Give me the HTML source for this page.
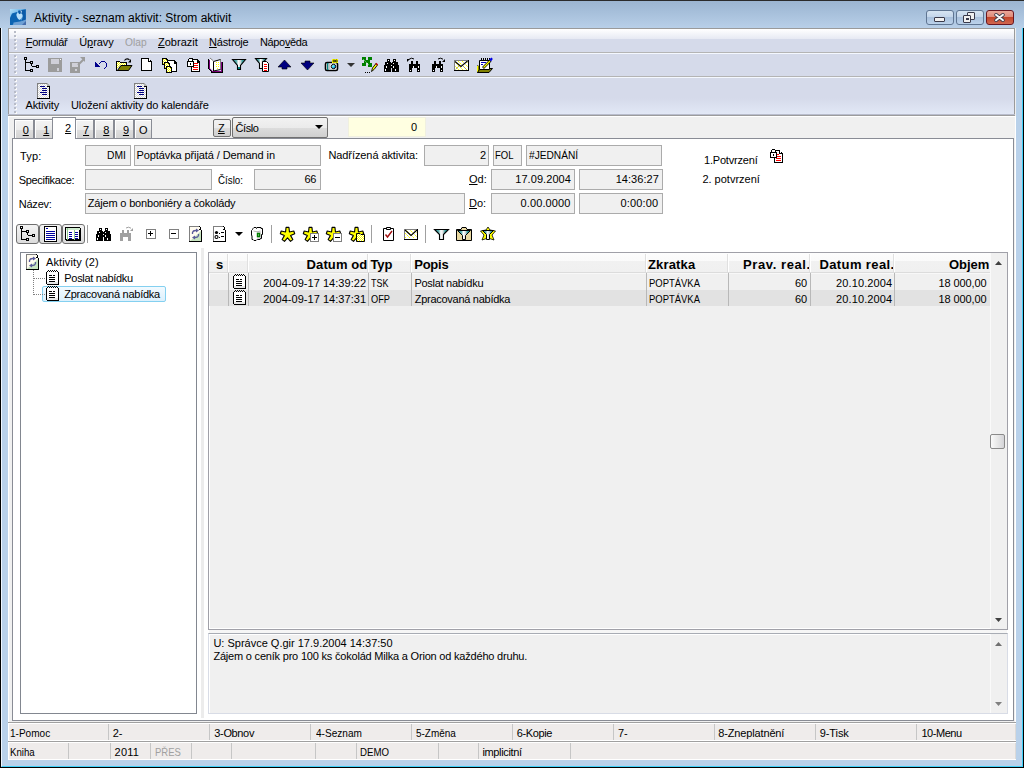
<!DOCTYPE html>
<html><head><meta charset="utf-8">
<style>
*{margin:0;padding:0;box-sizing:border-box}
html,body{width:1024px;height:768px;overflow:hidden;background:#b9d1ea}
body{position:relative;font-family:"Liberation Sans",sans-serif;font-size:11px;color:#000}
.a{position:absolute}
.t{position:absolute;white-space:nowrap;font-size:11px;line-height:13px}
.u{text-decoration:underline}
svg{position:absolute;overflow:visible}
.fld{position:absolute;background:#f0f0f0;border:1px solid #ababab}
.tab{position:absolute;top:119px;height:20px;border:1px solid #898c95;border-bottom:none;background:linear-gradient(#f4f4f4,#ececec 50%,#dedede 51%,#d2d2d2);box-shadow:inset 1px 1px 0 #fff}
.sep{position:absolute;width:1px;background:#c6c6c6}
</style></head><body>
<!-- outer frame -->
<div class="a" style="left:0;top:0;width:1024px;height:1px;background:#2b2b2b"></div>
<div class="a" style="left:0;top:1px;width:1024px;height:27px;background:linear-gradient(#9cb5d1,#a6bfda 40%,#b8cfe8)"></div>
<div class="a" style="left:0;top:28px;width:1px;height:740px;background:#000"></div><div class="a" style="left:1px;top:28px;width:1px;height:738px;background:#eef6ff"></div>
<div class="a" style="left:1022px;top:28px;width:1px;height:739px;background:#3fd0f8"></div>
<div class="a" style="left:1023px;top:28px;width:1px;height:740px;background:#000"></div>
<div class="a" style="left:2px;top:766px;width:1021px;height:1px;background:#3fd0f8"></div>
<div class="a" style="left:0;top:767px;width:1024px;height:1px;background:#000"></div>

<!-- title -->

<div class="t" style="left:34px;top:11px;font-size:12px;line-height:14px">Aktivity - seznam aktivit: Strom aktivit</div>

<!-- title buttons -->
<div class="a" style="left:926px;top:10px;width:28px;height:15px;border:1px solid #5f7592;border-radius:3px;background:linear-gradient(#d6e4f2,#c4d6ea 45%,#a9c1dd 50%,#bcd2ea)"></div>
<div class="a" style="left:934px;top:17px;width:11px;height:5px;border:1px solid #3a3a4a;background:#f0f0f0;border-radius:1px"></div>
<div class="a" style="left:956px;top:10px;width:28px;height:15px;border:1px solid #5f7592;border-radius:3px;background:linear-gradient(#d6e4f2,#c4d6ea 45%,#a9c1dd 50%,#bcd2ea)"></div>
<div class="a" style="left:967px;top:12px;width:8px;height:8px;border:1.5px solid #3a3a4a;background:#f0f0f0;border-radius:1px"></div>
<div class="a" style="left:963px;top:15px;width:8px;height:8px;border:1.5px solid #3a3a4a;background:#f0f0f0;border-radius:1px"></div><div class="a" style="left:966px;top:18px;width:3px;height:2px;background:#3a3a4a"></div>
<div class="a" style="left:986px;top:10px;width:28px;height:15px;border:1px solid #6a1620;border-radius:3px;background:linear-gradient(#eaa89a,#e08a78 45%,#c4452a 50%,#d06850)"></div>
<svg style="left:994px;top:13px" width="11" height="9" viewBox="0 0 11 9"><path d="M2 1.8L9 7.2M9 1.8L2 7.2" stroke="#3a3a48" stroke-width="3.6" stroke-linecap="round"/><path d="M2 1.8L9 7.2M9 1.8L2 7.2" stroke="#f6f6f6" stroke-width="2" stroke-linecap="round"/></svg>

<!-- client -->
<div class="a" style="left:8px;top:28px;width:1008px;height:732px;background:#f0f0f0"></div>
<div class="a" style="left:8px;top:116px;width:1px;height:644px;background:#fff"></div><div class="a" style="left:1015px;top:116px;width:1px;height:644px;background:#fff"></div><div class="a" style="left:8px;top:759px;width:1008px;height:1px;background:#fff"></div>
<!-- menu band -->
<div class="a" style="left:8px;top:28px;width:1007px;height:88px;border:1px solid #9a9a9a;border-bottom:none;background:#d5daea"></div>
<div class="a" style="left:9px;top:29px;width:1005px;height:10px;background:linear-gradient(#ffffff,#e6e9f3)"></div>
<div class="a" style="left:9px;top:52px;width:1005px;height:1px;background:#b4b4b4"></div>
<div class="a" style="left:9px;top:53px;width:1005px;height:1px;background:#f4f8ff"></div>
<div class="a" style="left:9px;top:76px;width:1005px;height:1px;background:#b4b4b4"></div>
<div class="a" style="left:9px;top:77px;width:1005px;height:1px;background:#f4f8ff"></div>
<div class="a" style="left:8px;top:114px;width:1007px;height:1px;background:#b8bccc"></div><div class="a" style="left:8px;top:116px;width:1007px;height:1px;background:#ffffff"></div>
<div class="a" style="left:9px;top:98px;width:1005px;height:16px;background:linear-gradient(#d5daea,#e2e8f6)"></div><div class="a" style="left:8px;top:115px;width:1007px;height:1px;background:#9c9c9c"></div>

<div class="t" style="left:25.8px;top:36px;letter-spacing:-0.31px"><u>F</u>ormulář</div>
<div class="t" style="left:79.2px;top:36px;letter-spacing:-0.06px">Ú<u>p</u>ravy</div>
<div class="t" style="left:124.5px;top:36px;color:#a0a0a0;transform:scaleX(0.930);transform-origin:0 0">Olap</div>
<div class="t" style="left:158.0px;top:36px"><u>Z</u>obrazit</div>
<div class="t" style="left:209.0px;top:36px;letter-spacing:-0.18px"><u>N</u>ástroje</div>
<div class="t" style="left:259.9px;top:36px;letter-spacing:-0.33px">Nápo<u>v</u>ěda</div>

<div class="t" style="left:25.6px;top:99px;letter-spacing:-0.17px">Aktivity</div>
<div class="t" style="left:71.0px;top:99px;letter-spacing:-0.10px">Uložení aktivity do kalendáře</div>


<!-- toolbar area background (client bg below toolbars) -->
<!-- tabs -->
<div class="tab" style="left:14px;width:20px"><span class="t u" style="left:7.7px;top:4px">0</span></div>
<div class="tab" style="left:34px;width:19px"><span class="t u" style="left:8.2px;top:4px">1</span></div>
<div class="tab" style="left:75px;width:19px"><span class="t u" style="left:7px;top:4px">7</span></div>
<div class="tab" style="left:94px;width:20px"><span class="t u" style="left:8.2px;top:4px">8</span></div>
<div class="tab" style="left:114px;width:20px"><span class="t u" style="left:7.9px;top:4px">9</span></div>
<div class="tab" style="left:134px;width:18px"><span class="t" style="left:4px;top:4px">O</span></div>
<!-- page -->
<div class="a" style="left:12px;top:138px;width:1002px;height:583px;background:#fff;border:1px solid #898c95"></div>
<div class="a" style="left:52px;top:117px;width:24px;height:22px;background:#fff;border:1px solid #898c95;border-bottom:none"></div>
<span class="t u" style="left:65px;top:122px">2</span>

<!-- Z button + combo + yellow -->
<div class="a" style="left:213px;top:119px;width:18px;height:18px;border:1px solid #707070;border-radius:2px;background:linear-gradient(#f2f2f2,#ebebeb 50%,#dddddd 51%,#cfcfcf)"></div>
<span class="t u" style="left:218px;top:122px">Z</span>
<div class="a" style="left:232px;top:117px;width:96px;height:21px;border:1px solid #707070;border-radius:2px;background:linear-gradient(#f2f2f2,#ebebeb 50%,#dddddd 51%,#cfcfcf)"></div>
<span class="t" style="left:235.5px;top:122px;letter-spacing:-0.4px">Číslo</span>
<svg style="left:315px;top:125px" width="9" height="5"><path d="M0 0H8L4 4Z" fill="#000"/></svg>
<div class="a" style="left:348px;top:117px;width:78px;height:20px;background:#ffffe1;border:1px solid #f0f0e0"></div>
<span class="t" style="left:411px;top:121px">0</span>

<!-- form labels -->
<span class="t" style="left:20.1px;top:150px;letter-spacing:0.12px">Typ:</span>
<span class="t" style="left:18.7px;top:174px;letter-spacing:-0.31px">Specifikace:</span>
<span class="t" style="left:18.7px;top:198px;letter-spacing:-0.20px">Název:</span>
<span class="t" style="left:217.5px;top:174px;transform:scaleX(0.887);transform-origin:0 0">Číslo:</span>
<span class="t" style="left:328.4px;top:149px;letter-spacing:-0.08px">Nadřízená aktivita:</span>
<span class="t" style="left:469px;top:173px"><u>O</u>d:</span>
<span class="t" style="left:469px;top:197px"><u>D</u>o:</span>
<span class="t" style="left:704.0px;top:154px;letter-spacing:-0.19px">1.Potvrzení</span>
<span class="t" style="left:702.4px;top:173px">2. potvrzení</span>

<div class="fld" style="left:85px;top:145px;width:46px;height:21px"></div><span class="t" style="left:107.4px;top:149px;transform:scaleX(0.935);transform-origin:0 0">DMI</span>
<div class="fld" style="left:134px;top:145px;width:187px;height:21px"></div><span class="t" style="left:136.5px;top:149px;letter-spacing:-0.10px">Poptávka přijatá / Demand in</span>
<div class="fld" style="left:424px;top:145px;width:65px;height:21px"></div><span class="t" style="left:479.9px;top:149px">2</span>
<div class="fld" style="left:493px;top:145px;width:29px;height:21px"></div><span class="t" style="left:495.2px;top:149px;transform:scaleX(0.865);transform-origin:0 0">FOL</span>
<div class="fld" style="left:526px;top:145px;width:136px;height:21px"></div><span class="t" style="left:529.2px;top:149px;transform:scaleX(0.924);transform-origin:0 0">#JEDNÁNÍ</span>
<div class="fld" style="left:85px;top:169px;width:127px;height:21px"></div>
<div class="fld" style="left:254px;top:169px;width:67px;height:21px"></div><span class="t" style="left:304.6px;top:173px;letter-spacing:-0.42px">66</span>
<div class="fld" style="left:491px;top:169px;width:84px;height:21px"></div><span class="t" style="left:515.2px;top:173px;letter-spacing:0.07px">17.09.2004</span>
<div class="fld" style="left:579px;top:169px;width:84px;height:21px"></div><span class="t" style="left:615.7px;top:173px;letter-spacing:0.04px">14:36:27</span>
<div class="fld" style="left:85px;top:193px;width:380px;height:21px"></div><span class="t" style="left:87.8px;top:197px;letter-spacing:-0.18px">Zájem o bonboniéry a čokolády</span>
<div class="fld" style="left:491px;top:193px;width:84px;height:21px"></div><span class="t" style="left:520.6px;top:197px;letter-spacing:0.10px">0.00.0000</span>
<div class="fld" style="left:579px;top:193px;width:84px;height:21px"></div><span class="t" style="left:620.6px;top:197px;letter-spacing:0.15px">0:00:00</span>

<!-- inner toolbar buttons -->
<div class="a" style="left:16px;top:224px;width:23px;height:20px;border:1px solid #6e6e6e;border-radius:3px;background:linear-gradient(#f4f4f4,#dcdcdc)"></div>
<div class="a" style="left:39px;top:224px;width:23px;height:20px;border:1px solid #6e6e6e;border-radius:3px;background:linear-gradient(#f4f4f4,#dcdcdc)"></div>
<div class="a" style="left:62px;top:224px;width:23px;height:20px;border:1px solid #6e6e6e;border-radius:3px;background:linear-gradient(#f4f4f4,#dcdcdc)"></div>
<div class="sep" style="left:87px;top:225px;height:18px;background:#a0a0a0"></div>
<div class="sep" style="left:271px;top:225px;height:18px;background:#a0a0a0"></div>
<div class="sep" style="left:371px;top:225px;height:18px;background:#a0a0a0"></div>
<div class="sep" style="left:425px;top:225px;height:18px;background:#a0a0a0"></div>

<!-- tree panel -->
<div class="a" style="left:20px;top:252px;width:177px;height:462px;border:1px solid #828790;background:#fff"></div>
<div class="a" style="left:201px;top:248px;width:3px;height:470px;background:#ececec"></div>
<span class="t" style="left:46.0px;top:256px;letter-spacing:0.12px">Aktivity (2)</span>
<span class="t" style="left:64.3px;top:272px;letter-spacing:-0.30px">Poslat nabídku</span>
<div class="a" style="left:42px;top:286px;width:124px;height:16px;border:1px solid #84d0f0;border-radius:2px;background:linear-gradient(#f2faff,#dcf0fc)"></div>
<span class="t" style="left:64.3px;top:288px;letter-spacing:-0.26px">Zpracovaná nabídka</span>
<div class="a" style="left:33px;top:270px;width:1px;height:25px;border-left:1px dotted #808080"></div>
<div class="a" style="left:34px;top:278px;width:11px;height:1px;border-top:1px dotted #808080"></div>
<div class="a" style="left:34px;top:294px;width:11px;height:1px;border-top:1px dotted #808080"></div>

<!-- grid -->
<div class="a" style="left:208px;top:252px;width:800px;height:378px;border:1px solid #a0a0a8;background:#f0f0f0;box-shadow:inset 1px -1px 0 #fff"></div>
<div class="a" style="left:209px;top:253px;width:781px;height:20px;background:linear-gradient(#fdfdfd,#fafafa 40%,#f1f1f1 41%,#f0f0f0)"></div>
<div class="a" style="left:209px;top:272px;width:781px;height:1px;background:#dcdcdc"></div><div class="a" style="left:209px;top:273px;width:781px;height:1px;background:#f8f8f8"></div>
<div class="a" style="left:209px;top:290px;width:781px;height:16px;background:#e2e2e2"></div>
<div class="a" style="left:990px;top:253px;width:17px;height:376px;background:#f0f0f0;border-left:1px solid #fafafa"></div>
<div class="a" style="left:990px;top:434px;width:15px;height:15px;border:1px solid #8a8a8a;border-radius:2px;background:linear-gradient(90deg,#fafafa,#e8e8e8 50%,#d4d4d8)"></div>


<!-- grid header text -->
<span class="t" style="left:216px;top:257px;font-size:13px;line-height:15px;font-weight:bold">s</span>
<span class="t" style="left:306.6px;top:257px;font-size:13px;line-height:15px;font-weight:bold;letter-spacing:0.11px">Datum od</span>
<span class="t" style="left:370.4px;top:257px;font-size:13px;line-height:15px;font-weight:bold;letter-spacing:-0.10px">Typ</span>
<span class="t" style="left:414.3px;top:257px;font-size:13px;line-height:15px;font-weight:bold;letter-spacing:-0.27px">Popis</span>
<span class="t" style="left:648.0px;top:257px;font-size:13px;line-height:15px;font-weight:bold;letter-spacing:0.16px">Zkratka</span>
<span class="t" style="left:743.0px;top:257px;font-size:13px;line-height:15px;font-weight:bold;letter-spacing:0.60px">Prav. real.</span>
<span class="t" style="left:819.4px;top:257px;font-size:13px;line-height:15px;font-weight:bold;letter-spacing:0.40px">Datum real.</span>
<span class="t" style="left:949.0px;top:257px;font-size:13px;line-height:15px;font-weight:bold;letter-spacing:-0.05px">Objem</span>
<!-- rows -->
<span class="t" style="left:263.2px;top:277px;letter-spacing:0.04px">2004-09-17 14:39:22</span>
<span class="t" style="left:371.0px;top:277px;transform:scaleX(0.812);transform-origin:0 0">TSK</span>
<span class="t" style="left:414.4px;top:277px;letter-spacing:-0.28px">Poslat nabídku</span>
<span class="t" style="left:648.5px;top:277px;transform:scaleX(0.859);transform-origin:0 0">POPTÁVKA</span>
<span class="t" style="left:794.9px;top:277px">60</span>
<span class="t" style="left:836.0px;top:277px;letter-spacing:0.12px">20.10.2004</span>
<span class="t" style="left:938.5px;top:277px;letter-spacing:-0.09px">18 000,00</span>
<span class="t" style="left:263.2px;top:293px;letter-spacing:0.04px">2004-09-17 14:37:31</span>
<span class="t" style="left:371.0px;top:293px;transform:scaleX(0.839);transform-origin:0 0">OFP</span>
<span class="t" style="left:414.7px;top:293px;letter-spacing:-0.27px">Zpracovaná nabídka</span>
<span class="t" style="left:648.5px;top:293px;transform:scaleX(0.859);transform-origin:0 0">POPTÁVKA</span>
<span class="t" style="left:794.9px;top:293px">60</span>
<span class="t" style="left:836.0px;top:293px;letter-spacing:0.12px">20.10.2004</span>
<span class="t" style="left:938.5px;top:293px;letter-spacing:-0.09px">18 000,00</span>
<div class="a" style="left:227px;top:254px;width:1px;height:18px;background:#e0e0e0"></div><div class="a" style="left:228px;top:254px;width:1px;height:18px;background:#fff"></div><div class="a" style="left:228px;top:273px;width:1px;height:33px;background:#b8b8b8"></div>
<div class="a" style="left:247px;top:254px;width:1px;height:18px;background:#e0e0e0"></div><div class="a" style="left:248px;top:254px;width:1px;height:18px;background:#fff"></div><div class="a" style="left:248px;top:273px;width:1px;height:33px;background:#b8b8b8"></div>
<div class="a" style="left:367px;top:254px;width:1px;height:18px;background:#e0e0e0"></div><div class="a" style="left:368px;top:254px;width:1px;height:18px;background:#fff"></div><div class="a" style="left:368px;top:273px;width:1px;height:33px;background:#b8b8b8"></div>
<div class="a" style="left:410px;top:254px;width:1px;height:18px;background:#e0e0e0"></div><div class="a" style="left:411px;top:254px;width:1px;height:18px;background:#fff"></div><div class="a" style="left:411px;top:273px;width:1px;height:33px;background:#b8b8b8"></div>
<div class="a" style="left:645px;top:254px;width:1px;height:18px;background:#e0e0e0"></div><div class="a" style="left:646px;top:254px;width:1px;height:18px;background:#fff"></div><div class="a" style="left:646px;top:273px;width:1px;height:33px;background:#b8b8b8"></div>
<div class="a" style="left:727px;top:254px;width:1px;height:18px;background:#e0e0e0"></div><div class="a" style="left:728px;top:254px;width:1px;height:18px;background:#fff"></div><div class="a" style="left:728px;top:273px;width:1px;height:33px;background:#b8b8b8"></div>
<div class="a" style="left:809px;top:254px;width:1px;height:18px;background:#e0e0e0"></div><div class="a" style="left:810px;top:254px;width:1px;height:18px;background:#fff"></div><div class="a" style="left:810px;top:273px;width:1px;height:33px;background:#b8b8b8"></div>
<div class="a" style="left:893px;top:254px;width:1px;height:18px;background:#e0e0e0"></div><div class="a" style="left:894px;top:254px;width:1px;height:18px;background:#fff"></div><div class="a" style="left:894px;top:273px;width:1px;height:33px;background:#b8b8b8"></div>
<!-- memo -->
<div class="a" style="left:208px;top:633px;width:800px;height:81px;border:1px solid #d8dce6;border-top:1px solid #a8acb4;background:#f0f0f0;box-shadow:inset 1px 1px 0 #fff"></div><div class="a" style="left:990px;top:634px;width:17px;height:79px;background:#f0f0f0;border-left:1px solid #fafafa"></div><div class="a" style="left:209px;top:630px;width:798px;height:3px;background:#f6f6f6"></div>
<span class="t" style="left:213.4px;top:637px">U: Správce Q.gir 17.9.2004 14:37:50</span>
<span class="t" style="left:213.4px;top:650px;letter-spacing:-0.20px">Zájem o ceník pro 100 ks čokolád Milka a Orion od každého druhu.</span>

<!-- function bar -->
<div class="a" style="left:8px;top:722px;width:1008px;height:1px;background:#a0a0a0"></div><div class="a" style="left:8px;top:723px;width:1008px;height:1px;background:#fff"></div><div class="a" style="left:8px;top:740px;width:1008px;height:1px;background:#fff"></div><div class="a" style="left:8px;top:742px;width:1008px;height:1px;background:#fff"></div>
<div class="a" style="left:9px;top:724px;width:1007px;height:16px;background:#efeceb;box-shadow:inset -1px 0 0 #dcdad8"></div>
<div class="a" style="left:8px;top:741px;width:1008px;height:1px;background:#a0a0a0"></div>
<div class="a" style="left:9px;top:743px;width:1007px;height:16px;background:#efeceb;box-shadow:inset -1px 0 0 #dcdad8"></div>

<span class="t" style="left:10.2px;top:727px;transform:scaleX(0.912);transform-origin:0 0">1-Pomoc</span>
<span class="t" style="left:112.7px;top:727px">2-</span>
<span class="t" style="left:214.3px;top:727px;letter-spacing:-0.35px">3-Obnov</span>
<span class="t" style="left:315.8px;top:727px;transform:scaleX(0.915);transform-origin:0 0">4-Seznam</span>
<span class="t" style="left:416.4px;top:727px;transform:scaleX(0.904);transform-origin:0 0">5-Změna</span>
<span class="t" style="left:516.7px;top:727px;letter-spacing:-0.38px">6-Kopie</span>
<span class="t" style="left:618.0px;top:727px;letter-spacing:-0.12px">7-</span>
<span class="t" style="left:718.3px;top:727px;letter-spacing:-0.15px">8-Zneplatnění</span>
<span class="t" style="left:819.8px;top:727px;letter-spacing:-0.11px">9-Tisk</span>
<span class="t" style="left:921.4px;top:727px;letter-spacing:-0.45px">10-Menu</span>
<span class="t" style="left:9.7px;top:746px;transform:scaleX(0.879);transform-origin:0 0">Kniha</span>
<span class="t" style="left:114.6px;top:746px;letter-spacing:0.19px">2011</span>
<span class="t" style="left:155.0px;top:746px;color:#a0a0a0;transform:scaleX(0.864);transform-origin:0 0">PŘES</span>
<span class="t" style="left:360.0px;top:746px;transform:scaleX(0.879);transform-origin:0 0">DEMO</span>
<span class="t" style="left:482.4px;top:746px;letter-spacing:-0.35px">implicitní</span>
<div class="sep" style="left:108px;top:724px;height:16px"></div><div class="sep" style="left:209px;top:724px;height:16px"></div><div class="sep" style="left:310px;top:724px;height:16px"></div><div class="sep" style="left:411px;top:724px;height:16px"></div><div class="sep" style="left:512px;top:724px;height:16px"></div><div class="sep" style="left:613px;top:724px;height:16px"></div><div class="sep" style="left:714px;top:724px;height:16px"></div><div class="sep" style="left:815px;top:724px;height:16px"></div><div class="sep" style="left:916px;top:724px;height:16px"></div><div class="sep" style="left:68px;top:743px;height:16px"></div><div class="sep" style="left:110px;top:743px;height:16px"></div><div class="sep" style="left:150px;top:743px;height:16px"></div><div class="sep" style="left:191px;top:743px;height:16px"></div><div class="sep" style="left:231px;top:743px;height:16px"></div><div class="sep" style="left:315px;top:743px;height:16px"></div><div class="sep" style="left:356px;top:743px;height:16px"></div><div class="sep" style="left:438px;top:743px;height:16px"></div><div class="sep" style="left:478px;top:743px;height:16px"></div><div class="sep" style="left:570px;top:743px;height:16px"></div>

<!--ICONS-->
<svg width="0" height="0" style="position:absolute"><defs>
<pattern id="chkY" width="2" height="2" patternUnits="userSpaceOnUse"><rect width="2" height="2" fill="#ffff00"/><rect width="1" height="1" fill="#ffffff"/><rect x="1" y="1" width="1" height="1" fill="#ffffff"/></pattern>
<pattern id="chkG" width="2" height="2" patternUnits="userSpaceOnUse"><rect width="2" height="2" fill="#ffffff"/><rect width="1" height="1" fill="#d8d8d8"/><rect x="1" y="1" width="1" height="1" fill="#d8d8d8"/></pattern>
<pattern id="chkY25" width="4" height="4" patternUnits="userSpaceOnUse"><rect width="4" height="4" fill="#ffffff"/><rect x="1" y="0" width="1" height="1" fill="#ffff00"/><rect x="3" y="2" width="1" height="1" fill="#ffff00"/><rect x="2" y="1" width="1" height="1" fill="#f0f080"/><rect x="0" y="3" width="1" height="1" fill="#f0f080"/></pattern>
<linearGradient id="funG" x1="0" x2="1"><stop offset="0" stop-color="#008080"/><stop offset="0.3" stop-color="#60b0b0"/><stop offset="0.45" stop-color="#ffffff"/><stop offset="0.6" stop-color="#e0e0e0"/><stop offset="0.75" stop-color="#40a0a0"/><stop offset="1" stop-color="#008080"/></linearGradient>
<linearGradient id="camG" x1="0" y1="0" x2="1" y2="1"><stop offset="0" stop-color="#ffffff"/><stop offset="0.5" stop-color="#40e0ff"/><stop offset="1" stop-color="#0040c0"/></linearGradient>
<linearGradient id="apg" x1="0" y1="0" x2="1" y2="1"><stop offset="0" stop-color="#b4e0fa"/><stop offset="0.5" stop-color="#5aa8e0"/><stop offset="1" stop-color="#3a78c0"/></linearGradient>
</defs></svg>
<svg style="left:24px;top:57px" width="16" height="16" viewBox="0 0 16 16" shape-rendering="crispEdges"><rect x="0.5" y="0.5" width="2" height="2" fill="none" stroke="#000"/><rect x="1" y="3" width="1" height="11" fill="#000"/><rect x="2" y="5" width="4" height="1" fill="#000"/><rect x="2" y="13" width="4" height="1" fill="#000"/><rect x="6.5" y="4.5" width="2" height="2" fill="none" stroke="#000"/><rect x="7" y="7" width="1" height="2" fill="#000"/><rect x="8" y="9" width="4" height="1" fill="#000"/><rect x="12.5" y="8.5" width="2" height="2" fill="none" stroke="#000"/><rect x="6.5" y="12.5" width="2" height="2" fill="none" stroke="#000"/></svg>
<svg style="left:47px;top:57px" width="16" height="16" viewBox="0 0 16 16" shape-rendering="crispEdges"><path d="M1 1H14L15 2V15H1Z" fill="#9c9c9c"/><rect x="4" y="2" width="8" height="5" fill="#d0d0d8"/><rect x="13" y="2" width="1" height="1" fill="#fff"/><rect x="10" y="11" width="2" height="3" fill="#d0d0d8"/></svg>
<svg style="left:70px;top:57px" width="16" height="16" viewBox="0 0 16 16"><path d="M0 5H10V16H0Z" fill="#9c9c9c"/><rect x="2" y="6" width="6" height="4" fill="#d0d0d8"/><rect x="5" y="12" width="2" height="2" fill="#d0d0d8"/><path d="M8 8L13.5 2.5" stroke="#9c9c9c" stroke-width="2"/><path d="M10 0H15V5Z" fill="#9c9c9c"/></svg>
<svg style="left:93px;top:57px" width="16" height="16" viewBox="0 0 16 16" shape-rendering="crispEdges"><rect x="2" y="5" width="1" height="1" fill="#00008c"/><rect x="2" y="6" width="2" height="1" fill="#00008c"/><rect x="2" y="7" width="3" height="1" fill="#00008c"/><rect x="2" y="8" width="4" height="1" fill="#00008c"/><rect x="2" y="9" width="5" height="1" fill="#00008c"/><rect x="6" y="6" width="1" height="1" fill="#00008c"/><rect x="7" y="5" width="1" height="1" fill="#00008c"/><rect x="8" y="4" width="4" height="1" fill="#00008c"/><rect x="12" y="5" width="1" height="1" fill="#00008c"/><rect x="13" y="6" width="1" height="4" fill="#00008c"/><rect x="12" y="10" width="1" height="1" fill="#00008c"/><rect x="11" y="11" width="1" height="1" fill="#00008c"/></svg>
<svg style="left:116px;top:57px" width="17" height="16" viewBox="0 0 17 16"><rect x="1" y="5" width="9" height="3" fill="url(#chkY)"/><path d="M1 8H4L1 12Z" fill="url(#chkY)"/><rect x="0" y="4" width="4" height="1" fill="#000"/><rect x="4" y="5" width="7" height="1" fill="#000"/><rect x="10" y="6" width="1" height="2" fill="#000"/><rect x="0" y="5" width="1" height="9" fill="#000"/><rect x="0" y="13" width="9" height="1" fill="#000"/><path d="M1.5 13.5L5 8.5H16L12.5 13.5Z" fill="#808000" stroke="#000"/><path d="M8.5 3.5Q10.5 0.8 13.5 2.8" fill="none" stroke="#000" stroke-width="1.1"/><path d="M12 5.5H15V2Z" fill="#000"/></svg>
<svg style="left:139px;top:57px" width="16" height="16" viewBox="0 0 16 16" shape-rendering="crispEdges"><path d="M2.5 1.5H9.5L12.5 4.5V13.5H2.5Z" fill="#fff" stroke="#000"/><path d="M9.5 1.5V4.5H12.5" fill="none" stroke="#000"/><rect x="10" y="2" width="1" height="2" fill="#fff"/></svg>
<svg style="left:162px;top:57px" width="16" height="16" viewBox="0 0 16 16" shape-rendering="crispEdges"><path d="M5.5 3.5H12L14.5 6V14.5H5.5Z" fill="#fff" stroke="#000"/><path d="M12 3.5V6H14.5" fill="none" stroke="#000"/><path d="M0.5 1.5H4L5.5 3V7.5H0.5Z" fill="url(#chkY)" stroke="#000"/><path d="M2.5 5.5H6L7.5 7V11.5H2.5Z" fill="url(#chkY)" stroke="#000"/><path d="M4.5 9.5H8L9.5 11V15.5H4.5Z" fill="url(#chkY)" stroke="#000"/></svg>
<svg style="left:185px;top:57px" width="16" height="16" viewBox="0 0 16 16" shape-rendering="crispEdges"><path d="M6.5 2.5H12L14.5 5V14.5H6.5Z" fill="#fff" stroke="#000"/><path d="M12 2.5V5H14.5" fill="none" stroke="#000"/><rect x="8" y="6" width="5" height="1" fill="#f00"/><rect x="8" y="8" width="5" height="1" fill="#f00"/><rect x="8" y="10" width="5" height="1" fill="#f00"/><rect x="8" y="12" width="5" height="1" fill="#f00"/><rect x="4" y="1" width="4" height="1" fill="#000"/><rect x="3" y="2" width="1" height="3" fill="#000"/><rect x="7" y="2" width="1" height="3" fill="#000"/><rect x="4" y="2" width="3" height="3" fill="#fff"/><rect x="2.5" y="4.5" width="6" height="5" fill="#fff" stroke="#000"/><rect x="5" y="6" width="1" height="2" fill="#000"/></svg>
<svg style="left:208px;top:57px" width="16" height="16" viewBox="0 0 16 16"><rect x="0" y="2" width="1" height="10" fill="#000"/><rect x="1" y="12" width="1" height="1" fill="#000"/><rect x="2" y="13" width="1" height="1" fill="#000"/><rect x="3" y="14" width="1" height="2" fill="#000"/><rect x="4" y="15" width="11" height="1" fill="#000"/><rect x="14" y="5" width="1" height="11" fill="#000"/><rect x="1" y="3" width="1" height="9" fill="#800080"/><rect x="2" y="12" width="1" height="1" fill="#800080"/><rect x="3" y="13" width="1" height="1" fill="#800080"/><rect x="4" y="14" width="10" height="1" fill="#800080"/><rect x="13" y="5" width="1" height="9" fill="#800080"/><path d="M2 1L5.5 4V13L2 11Z" fill="#fff"/><path d="M2 1L5.5 4" stroke="#808080" stroke-width="1"/><path d="M5.5 4.5L12.5 2.5V12.5L5.5 14Z" fill="#fff" stroke="#000" stroke-width="1"/><path d="M12.5 2.5V12.5" stroke="#808080"/><rect x="8" y="5" width="1" height="1" fill="#ffff00"/><rect x="10" y="5" width="1" height="1" fill="#ffff00"/><rect x="8" y="7" width="1" height="1" fill="#ffff00"/><rect x="10" y="7" width="1" height="1" fill="#ffff00"/><rect x="8" y="9" width="1" height="1" fill="#ffff00"/><rect x="10" y="9" width="1" height="1" fill="#ffff00"/><rect x="9" y="11" width="1" height="1" fill="#ffff00"/></svg>
<svg style="left:231px;top:57px" width="16" height="16" viewBox="0 0 16 16"><path d="M1.5 2.5H14.5L9.5 8.5V12.5H6.5V8.5Z" fill="url(#funG)" stroke="#000" stroke-width="1.1"/><rect x="7" y="10" width="2" height="2" fill="#008080"/></svg>
<svg style="left:254px;top:57px" width="16" height="16" viewBox="0 0 16 16"><path d="M1.5 1.5H12.5L8.5 6.5V11.5H5.5V6.5Z" fill="url(#funG)" stroke="#000" stroke-width="1.1"/><path d="M8.5 4.5H12.5L14.5 6.5V14.5H8.5Z" fill="#fff" stroke="#000"/><rect x="10" y="7" width="3" height="1" fill="#f00"/><rect x="10" y="9" width="3" height="1" fill="#f00"/><rect x="10" y="11" width="3" height="1" fill="#f00"/><rect x="10" y="13" width="3" height="1" fill="#f00"/></svg>
<svg style="left:277px;top:57px" width="16" height="16" viewBox="0 0 16 16"><path d="M1 10L7.5 3L14 10H10V12H5V10Z" fill="#000080" stroke="#000" stroke-width="0.6"/></svg>
<svg style="left:300px;top:57px" width="16" height="16" viewBox="0 0 16 16"><path d="M5 4H10V6H14L7.5 13L1 6H5Z" fill="#000080" stroke="#000" stroke-width="0.6"/></svg>
<svg style="left:323px;top:57px" width="17" height="16" viewBox="0 0 17 16"><rect x="2.5" y="5.5" width="12" height="8" rx="1.5" fill="#fff" stroke="#000" stroke-width="1.6"/><rect x="4" y="6" width="1.5" height="7" fill="#008080"/><rect x="5.5" y="7" width="2" height="5" fill="#c0c0c0"/><circle cx="10.5" cy="9.5" r="2.2" fill="url(#camG)" stroke="#000" stroke-width="1"/><path d="M9 2H15V6H9Z" fill="#ffff00"/><circle cx="11" cy="4" r="1" fill="none" stroke="#000" stroke-width="0.8"/><circle cx="13.3" cy="4" r="1" fill="none" stroke="#000" stroke-width="0.8"/></svg>
<svg style="left:347px;top:63px" width="8" height="5" viewBox="0 0 8 5"><path d="M0 0H8L4 4Z" fill="#333"/></svg>
<svg style="left:361px;top:57px" width="17" height="17" viewBox="0 0 17 17"><rect x="1" y="0" width="4" height="3" fill="#008000"/><rect x="7" y="0" width="4" height="3" fill="#008000"/><rect x="3" y="3" width="6" height="3" fill="#008000"/><rect x="1" y="6" width="4" height="3" fill="#008000"/><rect x="7" y="6" width="4" height="4" fill="#008000"/><path d="M2 2L8 8" stroke="#e0ffe0" stroke-width="0.7" stroke-dasharray="0.8 0.6"/><path d="M10.5 14.5L11.5 11L15 6.5L16.5 8L13 12.5Z" fill="#ffff00" stroke="#000" stroke-width="0.9"/><path d="M14.8 6.3L16.6 7.9" stroke="#c00000" stroke-width="1.4"/><rect x="4" y="15" width="1" height="1" fill="#000"/><rect x="6" y="15" width="1" height="1" fill="#000"/><rect x="8" y="15" width="1" height="1" fill="#000"/></svg>
<svg style="left:384px;top:57px" width="16" height="16" viewBox="0 0 16 16" shape-rendering="crispEdges"><rect x="3" y="2" width="3" height="3" fill="#000"/><rect x="1" y="5" width="6" height="3" fill="#000"/><rect x="0" y="8" width="7" height="7" fill="#000"/><rect x="7" y="6" width="1" height="5" fill="#000"/><rect x="9" y="2" width="3" height="3" fill="#000"/><rect x="8" y="5" width="6" height="3" fill="#000"/><rect x="8" y="8" width="7" height="7" fill="#000"/><rect x="4" y="3" width="1" height="1" fill="#fff"/><rect x="3" y="6" width="1" height="1" fill="#fff"/><rect x="2" y="9" width="1" height="2" fill="#fff"/><rect x="1" y="12" width="1" height="2" fill="#fff"/><rect x="7" y="8" width="1" height="1" fill="#fff"/><rect x="10" y="3" width="1" height="1" fill="#fff"/><rect x="9" y="6" width="1" height="1" fill="#fff"/><rect x="9" y="9" width="1" height="2" fill="#fff"/><rect x="11" y="12" width="1" height="2" fill="#fff"/></svg>
<svg style="left:406px;top:57px" width="16" height="16" viewBox="0 0 16 16"><rect x="5" y="4" width="2" height="3" fill="#000"/><rect x="10" y="4" width="2" height="3" fill="#000"/><rect x="3" y="7" width="11" height="4" fill="#000"/><rect x="3" y="11" width="3" height="4" fill="#000"/><rect x="11" y="11" width="3" height="4" fill="#000"/><rect x="7" y="9" width="1" height="2" fill="#fff"/><rect x="12" y="9" width="1" height="2" fill="#fff"/><rect x="4" y="13" width="1" height="1" fill="#fff"/><rect x="12" y="13" width="1" height="1" fill="#fff"/><path d="M3.2 2.2Q5.5 0.3 8 2" fill="none" stroke="#000" stroke-width="1"/><path d="M1 2H4L1 5Z" fill="#000"/></svg>
<svg style="left:431px;top:57px" width="16" height="16" viewBox="0 0 16 16"><rect x="3" y="4" width="2" height="3" fill="#000"/><rect x="8" y="4" width="2" height="3" fill="#000"/><rect x="1" y="7" width="11" height="4" fill="#000"/><rect x="1" y="11" width="3" height="4" fill="#000"/><rect x="9" y="11" width="3" height="4" fill="#000"/><rect x="5" y="9" width="1" height="2" fill="#fff"/><rect x="10" y="9" width="1" height="2" fill="#fff"/><rect x="2" y="13" width="1" height="1" fill="#fff"/><rect x="10" y="13" width="1" height="1" fill="#fff"/><path d="M7 2Q9.5 0.3 12 2.2" fill="none" stroke="#000" stroke-width="1"/><path d="M11 5H14V2Z" fill="#000"/></svg>
<svg style="left:453px;top:57px" width="16" height="16" viewBox="0 0 16 16"><rect x="2" y="4" width="13" height="9" fill="url(#chkY25)"/><rect x="1" y="3" width="14" height="1" fill="#808080"/><rect x="1" y="3" width="1" height="11" fill="#808080"/><rect x="1" y="13" width="15" height="1" fill="#000"/><rect x="15" y="3" width="1" height="11" fill="#000"/><path d="M2 4.5L8 9.5L14.5 4" fill="none" stroke="#000" stroke-width="1.1"/><path d="M2.5 12.5L6 9M13.5 12.5L10 9" stroke="#a0a040" stroke-width="0.8"/></svg>
<svg style="left:476px;top:57px" width="17" height="17" viewBox="0 0 17 17"><path d="M0.5 8.5H2V15.5H13L16 12H3" fill="none"/><path d="M1.5 8.5V15.5H13L16.5 11.5H12V9.5" fill="#808000" stroke="#000"/><rect x="1" y="9" width="1" height="6" fill="#ffff00"/><path d="M3.5 3.5H13.5V12.5H3.5Z" fill="#fff" stroke="#000"/><path d="M3.5 12.5L1.5 15.5" stroke="#000"/><rect x="5" y="1" width="1" height="2" fill="#000"/><rect x="7" y="1" width="1" height="2" fill="#000"/><rect x="9" y="1" width="1" height="2" fill="#000"/><rect x="11" y="1" width="1" height="2" fill="#000"/><rect x="13" y="1" width="1" height="2" fill="#000"/><rect x="5" y="5" width="5" height="1" fill="#0000c0"/><rect x="5" y="7" width="2" height="1" fill="#0000c0"/><path d="M7 11L14.5 3.5" stroke="#000" stroke-width="2.6"/><path d="M7.5 10.5L14 4" stroke="#ffff00" stroke-width="1.2"/><path d="M13 2.5L15.5 0.5L16.8 2L15 4.5Z" fill="#0000e0"/></svg>
<svg style="left:37px;top:83px" width="14" height="16" viewBox="0 0 14 16" shape-rendering="crispEdges"><rect x="0" y="0" width="11" height="1" fill="#808080"/><rect x="0" y="0" width="1" height="15" fill="#808080"/><rect x="0" y="15" width="13" height="1" fill="#000"/><rect x="12" y="3" width="1" height="13" fill="#000"/><rect x="1" y="1" width="11" height="14" fill="url(#chkG)"/><path d="M10 0L13 3H10Z" fill="#b0b0b0"/><rect x="10" y="3" width="3" height="1" fill="#000"/><rect x="3" y="3" width="5" height="1" fill="#000080"/><rect x="5" y="5" width="5" height="1" fill="#000080"/><rect x="5" y="7" width="5" height="1" fill="#000080"/><rect x="3" y="9" width="7" height="1" fill="#000080"/><rect x="5" y="11" width="5" height="1" fill="#000080"/></svg>
<svg style="left:134px;top:83px" width="14" height="16" viewBox="0 0 14 16" shape-rendering="crispEdges"><rect x="0" y="0" width="11" height="1" fill="#808080"/><rect x="0" y="0" width="1" height="15" fill="#808080"/><rect x="0" y="15" width="13" height="1" fill="#000"/><rect x="12" y="3" width="1" height="13" fill="#000"/><rect x="1" y="1" width="11" height="14" fill="url(#chkG)"/><path d="M10 0L13 3H10Z" fill="#b0b0b0"/><rect x="10" y="3" width="3" height="1" fill="#000"/><rect x="3" y="3" width="5" height="1" fill="#000080"/><rect x="5" y="5" width="5" height="1" fill="#000080"/><rect x="5" y="7" width="5" height="1" fill="#000080"/><rect x="3" y="9" width="7" height="1" fill="#000080"/><rect x="5" y="11" width="5" height="1" fill="#000080"/></svg>
<div class="a" style="left:14px;top:31px;width:2px;height:2px;background:#b8bcc8;box-shadow:1px 1px 0 #fafafa"></div><div class="a" style="left:14px;top:35px;width:2px;height:2px;background:#b8bcc8;box-shadow:1px 1px 0 #fafafa"></div><div class="a" style="left:14px;top:39px;width:2px;height:2px;background:#b8bcc8;box-shadow:1px 1px 0 #fafafa"></div><div class="a" style="left:14px;top:43px;width:2px;height:2px;background:#b8bcc8;box-shadow:1px 1px 0 #fafafa"></div><div class="a" style="left:14px;top:47px;width:2px;height:2px;background:#b8bcc8;box-shadow:1px 1px 0 #fafafa"></div><div class="a" style="left:14px;top:55px;width:2px;height:2px;background:#b8bcc8;box-shadow:1px 1px 0 #fafafa"></div><div class="a" style="left:14px;top:59px;width:2px;height:2px;background:#b8bcc8;box-shadow:1px 1px 0 #fafafa"></div><div class="a" style="left:14px;top:63px;width:2px;height:2px;background:#b8bcc8;box-shadow:1px 1px 0 #fafafa"></div><div class="a" style="left:14px;top:67px;width:2px;height:2px;background:#b8bcc8;box-shadow:1px 1px 0 #fafafa"></div><div class="a" style="left:14px;top:71px;width:2px;height:2px;background:#b8bcc8;box-shadow:1px 1px 0 #fafafa"></div><div class="a" style="left:14px;top:79px;width:2px;height:2px;background:#b8bcc8;box-shadow:1px 1px 0 #fafafa"></div><div class="a" style="left:14px;top:83px;width:2px;height:2px;background:#b8bcc8;box-shadow:1px 1px 0 #fafafa"></div><div class="a" style="left:14px;top:87px;width:2px;height:2px;background:#b8bcc8;box-shadow:1px 1px 0 #fafafa"></div><div class="a" style="left:14px;top:91px;width:2px;height:2px;background:#b8bcc8;box-shadow:1px 1px 0 #fafafa"></div><div class="a" style="left:14px;top:95px;width:2px;height:2px;background:#b8bcc8;box-shadow:1px 1px 0 #fafafa"></div><div class="a" style="left:14px;top:99px;width:2px;height:2px;background:#b8bcc8;box-shadow:1px 1px 0 #fafafa"></div><div class="a" style="left:14px;top:103px;width:2px;height:2px;background:#b8bcc8;box-shadow:1px 1px 0 #fafafa"></div><div class="a" style="left:14px;top:107px;width:2px;height:2px;background:#b8bcc8;box-shadow:1px 1px 0 #fafafa"></div><div class="a" style="left:14px;top:111px;width:2px;height:2px;background:#b8bcc8;box-shadow:1px 1px 0 #fafafa"></div><svg style="left:20px;top:226px" width="16" height="16" viewBox="0 0 16 16" shape-rendering="crispEdges"><rect x="0.5" y="0.5" width="2" height="2" fill="none" stroke="#000"/><rect x="1" y="3" width="1" height="11" fill="#000"/><rect x="2" y="5" width="4" height="1" fill="#000"/><rect x="2" y="13" width="4" height="1" fill="#000"/><rect x="6.5" y="4.5" width="2" height="2" fill="none" stroke="#000"/><rect x="7" y="7" width="1" height="2" fill="#000"/><rect x="8" y="9" width="4" height="1" fill="#000"/><rect x="12.5" y="8.5" width="2" height="2" fill="none" stroke="#000"/><rect x="6.5" y="12.5" width="2" height="2" fill="none" stroke="#000"/></svg>
<svg style="left:44px;top:226px" width="14" height="16" viewBox="0 0 14 16" shape-rendering="crispEdges"><rect x="0" y="0" width="13" height="1" fill="#000"/><rect x="0" y="0" width="1" height="15" fill="#000"/><rect x="1" y="1" width="11" height="14" fill="#fff"/><rect x="12" y="1" width="1" height="15" fill="#000"/><rect x="0" y="15" width="13" height="1" fill="#000"/><rect x="2" y="2" width="2" height="1" fill="#0000a0"/><rect x="2" y="5" width="9" height="1" fill="#0000a0"/><rect x="2" y="7" width="9" height="1" fill="#0000a0"/><rect x="2" y="9" width="9" height="1" fill="#0000a0"/><rect x="2" y="11" width="9" height="1" fill="#0000a0"/><rect x="2" y="13" width="9" height="1" fill="#0000a0"/></svg>
<svg style="left:65px;top:227px" width="16" height="14" viewBox="0 0 16 14" shape-rendering="crispEdges"><path d="M0.5 0.5H14.5V12.5H0.5Z" fill="#fff" stroke="#000"/><rect x="1" y="13" width="15" height="1" fill="#000"/><rect x="15" y="1" width="1" height="13" fill="#000"/><rect x="1" y="1" width="14" height="2" fill="#d0ecd0"/><rect x="2" y="1" width="1" height="12" fill="#90c890"/><rect x="9" y="3" width="1" height="10" fill="#90c890"/><rect x="4" y="5" width="3" height="1" fill="#0000a0"/><rect x="10" y="5" width="3" height="1" fill="#0000a0"/><rect x="4" y="7" width="3" height="1" fill="#0000a0"/><rect x="10" y="7" width="3" height="1" fill="#0000a0"/><rect x="4" y="9" width="3" height="1" fill="#0000a0"/><rect x="10" y="9" width="3" height="1" fill="#0000a0"/><rect x="4" y="11" width="3" height="1" fill="#0000a0"/><rect x="10" y="11" width="3" height="1" fill="#0000a0"/></svg>
<svg style="left:96px;top:228px" width="16" height="16" viewBox="0 0 16 16" shape-rendering="crispEdges"><g transform="translate(0,-2)"><rect x="3" y="2" width="3" height="3" fill="#000"/><rect x="1" y="5" width="6" height="3" fill="#000"/><rect x="0" y="8" width="7" height="7" fill="#000"/><rect x="7" y="6" width="1" height="5" fill="#000"/><rect x="9" y="2" width="3" height="3" fill="#000"/><rect x="8" y="5" width="6" height="3" fill="#000"/><rect x="8" y="8" width="7" height="7" fill="#000"/><rect x="4" y="3" width="1" height="1" fill="#fff"/><rect x="3" y="6" width="1" height="1" fill="#fff"/><rect x="2" y="9" width="1" height="2" fill="#fff"/><rect x="1" y="12" width="1" height="2" fill="#fff"/><rect x="7" y="8" width="1" height="1" fill="#fff"/><rect x="10" y="3" width="1" height="1" fill="#fff"/><rect x="9" y="6" width="1" height="1" fill="#fff"/><rect x="9" y="9" width="1" height="2" fill="#fff"/><rect x="11" y="12" width="1" height="2" fill="#fff"/></g></svg>
<svg style="left:120px;top:226px" width="16" height="16" viewBox="0 0 16 16"><rect x="2" y="4" width="2" height="3" fill="#a0a0a0"/><rect x="7" y="4" width="2" height="3" fill="#a0a0a0"/><rect x="0" y="7" width="11" height="4" fill="#a0a0a0"/><rect x="0" y="11" width="3" height="4" fill="#a0a0a0"/><rect x="8" y="11" width="3" height="4" fill="#a0a0a0"/><path d="M6 2Q8.5 0.3 11 2.2" fill="none" stroke="#a0a0a0" stroke-width="1"/><path d="M10 5H13V2Z" fill="#a0a0a0"/></svg>
<svg style="left:146px;top:229px" width="10" height="10" viewBox="0 0 10 10" shape-rendering="crispEdges"><rect x="0.5" y="0.5" width="9" height="9" fill="#fff" stroke="#808080"/><rect x="2" y="4" width="5" height="1" fill="#000"/><rect x="4" y="2" width="1" height="5" fill="#000"/></svg>
<svg style="left:169px;top:229px" width="10" height="10" viewBox="0 0 10 10" shape-rendering="crispEdges"><rect x="0.5" y="0.5" width="9" height="9" fill="#fff" stroke="#808080"/><rect x="2" y="4" width="5" height="1" fill="#000"/></svg>
<svg style="left:189px;top:226px" width="14" height="16" viewBox="0 0 14 16"><rect x="0" y="0" width="10" height="1" fill="#808080"/><rect x="0" y="0" width="1" height="16" fill="#808080"/><rect x="1" y="1" width="11" height="14" fill="#fffbf0"/><path d="M1 15L12 5V15Z" fill="#c8e4c0"/><rect x="0" y="15" width="13" height="1" fill="#000"/><rect x="12" y="4" width="1" height="12" fill="#000"/><rect x="10" y="0" width="1" height="1" fill="#000"/><rect x="11" y="1" width="1" height="2" fill="#000"/><rect x="10" y="3" width="2" height="1" fill="#000"/><path d="M3.5 8V6.5Q4 4.5 6.5 4.5H8" fill="none" stroke="#5a5a9a" stroke-width="1.3"/><path d="M7 2.5L10 4.5L7 6.5Z" fill="#5a5a9a"/><path d="M9.5 8V9.5Q9 11.5 6.5 11.5H5" fill="none" stroke="#5a5a9a" stroke-width="1.3"/><path d="M6 9.5L3 11.5L6 13.5Z" fill="#5a5a9a"/></svg>
<svg style="left:213px;top:226px" width="14" height="16" viewBox="0 0 14 16"><rect x="0" y="0" width="10" height="1" fill="#808080"/><rect x="0" y="0" width="1" height="16" fill="#808080"/><rect x="1" y="1" width="11" height="14" fill="#fff"/><rect x="0" y="15" width="13" height="1" fill="#000"/><rect x="12" y="4" width="1" height="12" fill="#000"/><rect x="10" y="0" width="1" height="1" fill="#000"/><rect x="11" y="1" width="1" height="2" fill="#000"/><rect x="10" y="3" width="2" height="1" fill="#000"/><circle cx="3.5" cy="6.5" r="1.6" fill="#000"/><circle cx="3.5" cy="11" r="1.5" fill="#fff" stroke="#000" stroke-width="1.1"/><rect x="6" y="7" width="1" height="1" fill="#000"/><rect x="8" y="6" width="3" height="1" fill="#000"/><rect x="6" y="11" width="1" height="1" fill="#000"/><rect x="8" y="10" width="3" height="1" fill="#000"/></svg>
<svg style="left:235px;top:232px" width="8" height="4" viewBox="0 0 8 4"><path d="M0 0H8L4 4Z" fill="#000"/></svg>
<svg style="left:250px;top:226px" width="14" height="16" viewBox="0 0 14 16"><path d="M4 1.5H6L6.5 2.5L7 1.5H11V2.5H12.5V8.5H11.5V12.5H10V13.5H7L6 14.5H4L3 13.5H2V9.5H1.5V4.5L2.5 3.5L3 2.5Z" fill="#fff" stroke="#000" stroke-linejoin="round"/><path d="M7 6L11 5.5V12L7 13.5Z" fill="#e0d8e0"/><path d="M3.5 5Q7 6.5 10.5 5" fill="none" stroke="#a0a0a0" stroke-width="0.8"/><path d="M7.5 7.5H9.5V10.5H7.5Z" fill="none" stroke="#008000" stroke-width="1.4"/></svg>
<svg style="left:280px;top:227px" width="15" height="14" viewBox="0 0 15 14"><path d="M6.06 0.35 L8.94 0.35 L9.44 4.93 L13.81 3.96 L14.70 6.76 L10.64 8.62 L12.84 12.60 L10.51 14.33 L7.50 10.90 L4.49 14.33 L2.16 12.60 L4.36 8.62 L0.30 6.76 L1.19 3.96 L5.56 4.93Z" fill="#ffff00" stroke="#000" stroke-width="1.1" stroke-linejoin="round"/></svg>
<svg style="left:303px;top:227px" width="17" height="15" viewBox="0 0 17 15"><path d="M6.06 0.35 L8.94 0.35 L9.44 4.93 L13.81 3.96 L14.70 6.76 L10.64 8.62 L12.84 12.60 L10.51 14.33 L7.50 10.90 L4.49 14.33 L2.16 12.60 L4.36 8.62 L0.30 6.76 L1.19 3.96 L5.56 4.93Z" fill="#ffff00" stroke="#000" stroke-width="1.1" stroke-linejoin="round"/><rect x="7.5" y="6.5" width="8" height="8" fill="#fff" stroke="#808080"/><rect x="9" y="10" width="5" height="1" fill="#000"/><rect x="11" y="8" width="1" height="5" fill="#000"/></svg>
<svg style="left:326px;top:227px" width="17" height="15" viewBox="0 0 17 15"><path d="M6.06 0.35 L8.94 0.35 L9.44 4.93 L13.81 3.96 L14.70 6.76 L10.64 8.62 L12.84 12.60 L10.51 14.33 L7.50 10.90 L4.49 14.33 L2.16 12.60 L4.36 8.62 L0.30 6.76 L1.19 3.96 L5.56 4.93Z" fill="#ffff00" stroke="#000" stroke-width="1.1" stroke-linejoin="round"/><rect x="7.5" y="6.5" width="8" height="8" fill="#fff" stroke="#808080"/><rect x="9" y="10" width="5" height="1" fill="#000"/></svg>
<svg style="left:349px;top:227px" width="17" height="15" viewBox="0 0 17 15"><path d="M6.06 0.35 L8.94 0.35 L9.44 4.93 L13.81 3.96 L14.70 6.76 L10.64 8.62 L12.84 12.60 L10.51 14.33 L7.50 10.90 L4.49 14.33 L2.16 12.60 L4.36 8.62 L0.30 6.76 L1.19 3.96 L5.56 4.93Z" fill="#ffff00" stroke="#000" stroke-width="1.1" stroke-linejoin="round"/><path d="M7.5 6.5H11L12 7.5H15.5V14.5H7.5Z" fill="url(#chkY)" stroke="#000"/></svg>
<svg style="left:382px;top:226px" width="13" height="15" viewBox="0 0 13 15"><path d="M1.5 2.5H11.5V14.5H1.5Z" fill="#fff" stroke="#000"/><path d="M4.5 1.5H8.5V3.5H4.5Z" fill="#fff" stroke="#000"/><path d="M3.5 8.5L5.5 11L10 5" fill="none" stroke="#a01010" stroke-width="1.4"/></svg>
<svg style="left:404px;top:229px" width="14" height="11" viewBox="0 0 14 11"><rect x="1" y="1" width="12" height="8" fill="url(#chkY25)"/><rect x="0" y="0" width="14" height="1" fill="#808080"/><rect x="0" y="0" width="1" height="10" fill="#808080"/><rect x="0" y="10" width="14" height="1" fill="#000"/><rect x="13" y="0" width="1" height="11" fill="#000"/><path d="M1 1L7 6.5L13 1" fill="none" stroke="#000" stroke-width="1.1"/></svg>
<svg style="left:434px;top:228px" width="16" height="13" viewBox="0 0 16 13"><path d="M0.5 1.5H14.5L9.5 6.5V11.5H5.5V6.5Z" fill="url(#funG)" stroke="#000" stroke-width="1.1"/></svg>
<svg style="left:456px;top:227px" width="17" height="15" viewBox="0 0 17 15"><path d="M0.5 2.5H5L6 0.5H10L11 2.5H15.5V13.5H0.5Z" fill="#e8d8a0" stroke="#000"/><path d="M1.5 3.5H14.5L9.5 8.5V12.5H6.5V8.5Z" fill="url(#funG)" stroke="#000"/></svg>
<svg style="left:480px;top:227px" width="17" height="15" viewBox="0 0 17 15"><path d="M8 0L10 3L15.5 4L12 8L14 13L8 11L2 13L4 8L0.5 4L6 3Z" fill="#ffff00" stroke="#000" stroke-width="0.8"/><path d="M2.5 3.5H13.5L9.5 7.5V12.5H6.5V7.5Z" fill="url(#funG)" stroke="#000"/></svg>
<svg style="left:26px;top:254px" width="13" height="16" viewBox="0 0 13 16"><rect x="0" y="0" width="10" height="1" fill="#808080"/><rect x="0" y="0" width="1" height="16" fill="#808080"/><rect x="1" y="1" width="11" height="14" fill="#fffbf0"/><path d="M1 15L12 5V15Z" fill="#c8e4c0"/><rect x="0" y="15" width="13" height="1" fill="#000"/><rect x="12" y="4" width="1" height="12" fill="#000"/><rect x="10" y="0" width="1" height="1" fill="#000"/><rect x="11" y="1" width="1" height="2" fill="#000"/><rect x="10" y="3" width="2" height="1" fill="#000"/><path d="M3.5 8V6.5Q4 4.5 6.5 4.5H8" fill="none" stroke="#5a5a9a" stroke-width="1.3"/><path d="M7 2.5L10 4.5L7 6.5Z" fill="#5a5a9a"/><path d="M9.5 8V9.5Q9 11.5 6.5 11.5H5" fill="none" stroke="#5a5a9a" stroke-width="1.3"/><path d="M6 9.5L3 11.5L6 13.5Z" fill="#5a5a9a"/></svg>
<svg style="left:46px;top:270px" width="13" height="16" viewBox="0 0 13 16" shape-rendering="crispEdges"><rect x="1" y="2" width="11" height="12" fill="#fff"/><rect x="1" y="12" width="11" height="2" fill="#e8e8e8"/><rect x="2" y="0" width="1" height="1" fill="#000"/><rect x="4" y="0" width="1" height="1" fill="#000"/><rect x="6" y="0" width="1" height="1" fill="#000"/><rect x="8" y="0" width="1" height="1" fill="#000"/><rect x="10" y="0" width="1" height="1" fill="#000"/><rect x="1" y="1" width="1" height="1" fill="#000"/><rect x="3" y="1" width="1" height="1" fill="#000"/><rect x="5" y="1" width="1" height="1" fill="#000"/><rect x="7" y="1" width="1" height="1" fill="#000"/><rect x="9" y="1" width="1" height="1" fill="#000"/><rect x="11" y="1" width="1" height="1" fill="#000"/><rect x="0" y="2" width="1" height="12" fill="#000"/><rect x="12" y="2" width="1" height="13" fill="#000"/><rect x="1" y="14" width="11" height="1" fill="#000"/><rect x="1" y="2" width="11" height="1" fill="#fff"/><rect x="3" y="5" width="3" height="1" fill="#000"/><rect x="7" y="5" width="2" height="1" fill="#000"/><rect x="3" y="7" width="6" height="1" fill="#000"/><rect x="3" y="9" width="6" height="1" fill="#000"/><rect x="3" y="11" width="6" height="1" fill="#000"/></svg>
<svg style="left:46px;top:286px" width="13" height="16" viewBox="0 0 13 16" shape-rendering="crispEdges"><rect x="1" y="2" width="11" height="12" fill="#fff"/><rect x="1" y="12" width="11" height="2" fill="#e8e8e8"/><rect x="2" y="0" width="1" height="1" fill="#000"/><rect x="4" y="0" width="1" height="1" fill="#000"/><rect x="6" y="0" width="1" height="1" fill="#000"/><rect x="8" y="0" width="1" height="1" fill="#000"/><rect x="10" y="0" width="1" height="1" fill="#000"/><rect x="1" y="1" width="1" height="1" fill="#000"/><rect x="3" y="1" width="1" height="1" fill="#000"/><rect x="5" y="1" width="1" height="1" fill="#000"/><rect x="7" y="1" width="1" height="1" fill="#000"/><rect x="9" y="1" width="1" height="1" fill="#000"/><rect x="11" y="1" width="1" height="1" fill="#000"/><rect x="0" y="2" width="1" height="12" fill="#000"/><rect x="12" y="2" width="1" height="13" fill="#000"/><rect x="1" y="14" width="11" height="1" fill="#000"/><rect x="1" y="2" width="11" height="1" fill="#fff"/><rect x="3" y="5" width="3" height="1" fill="#000"/><rect x="7" y="5" width="2" height="1" fill="#000"/><rect x="3" y="7" width="6" height="1" fill="#000"/><rect x="3" y="9" width="6" height="1" fill="#000"/><rect x="3" y="11" width="6" height="1" fill="#000"/></svg>
<svg style="left:233px;top:274px" width="13" height="16" viewBox="0 0 13 16" shape-rendering="crispEdges"><rect x="1" y="2" width="11" height="12" fill="#fff"/><rect x="1" y="12" width="11" height="2" fill="#e8e8e8"/><rect x="2" y="0" width="1" height="1" fill="#000"/><rect x="4" y="0" width="1" height="1" fill="#000"/><rect x="6" y="0" width="1" height="1" fill="#000"/><rect x="8" y="0" width="1" height="1" fill="#000"/><rect x="10" y="0" width="1" height="1" fill="#000"/><rect x="1" y="1" width="1" height="1" fill="#000"/><rect x="3" y="1" width="1" height="1" fill="#000"/><rect x="5" y="1" width="1" height="1" fill="#000"/><rect x="7" y="1" width="1" height="1" fill="#000"/><rect x="9" y="1" width="1" height="1" fill="#000"/><rect x="11" y="1" width="1" height="1" fill="#000"/><rect x="0" y="2" width="1" height="12" fill="#000"/><rect x="12" y="2" width="1" height="13" fill="#000"/><rect x="1" y="14" width="11" height="1" fill="#000"/><rect x="1" y="2" width="11" height="1" fill="#fff"/><rect x="3" y="5" width="3" height="1" fill="#000"/><rect x="7" y="5" width="2" height="1" fill="#000"/><rect x="3" y="7" width="6" height="1" fill="#000"/><rect x="3" y="9" width="6" height="1" fill="#000"/><rect x="3" y="11" width="6" height="1" fill="#000"/></svg>
<svg style="left:233px;top:290px" width="13" height="16" viewBox="0 0 13 16" shape-rendering="crispEdges"><rect x="1" y="2" width="11" height="12" fill="#fff"/><rect x="1" y="12" width="11" height="2" fill="#e8e8e8"/><rect x="2" y="0" width="1" height="1" fill="#000"/><rect x="4" y="0" width="1" height="1" fill="#000"/><rect x="6" y="0" width="1" height="1" fill="#000"/><rect x="8" y="0" width="1" height="1" fill="#000"/><rect x="10" y="0" width="1" height="1" fill="#000"/><rect x="1" y="1" width="1" height="1" fill="#000"/><rect x="3" y="1" width="1" height="1" fill="#000"/><rect x="5" y="1" width="1" height="1" fill="#000"/><rect x="7" y="1" width="1" height="1" fill="#000"/><rect x="9" y="1" width="1" height="1" fill="#000"/><rect x="11" y="1" width="1" height="1" fill="#000"/><rect x="0" y="2" width="1" height="12" fill="#000"/><rect x="12" y="2" width="1" height="13" fill="#000"/><rect x="1" y="14" width="11" height="1" fill="#000"/><rect x="1" y="2" width="11" height="1" fill="#fff"/><rect x="3" y="5" width="3" height="1" fill="#000"/><rect x="7" y="5" width="2" height="1" fill="#000"/><rect x="3" y="7" width="6" height="1" fill="#000"/><rect x="3" y="9" width="6" height="1" fill="#000"/><rect x="3" y="11" width="6" height="1" fill="#000"/></svg>
<svg style="left:995px;top:261px" width="7" height="4" viewBox="0 0 7 4"><path d="M0 4L3.5 0L7 4Z" fill="#404040"/></svg>
<svg style="left:995px;top:618px" width="7" height="4" viewBox="0 0 7 4"><path d="M0 0L3.5 4L7 0Z" fill="#404040"/></svg>
<svg style="left:995px;top:642px" width="7" height="4" viewBox="0 0 7 4"><path d="M0 4L3.5 0L7 4Z" fill="#707070"/></svg>
<svg style="left:995px;top:702px" width="7" height="4" viewBox="0 0 7 4"><path d="M0 0L3.5 4L7 0Z" fill="#808080"/></svg>
<svg style="left:770px;top:149px" width="14" height="14" viewBox="0 0 14 14" shape-rendering="crispEdges"><path d="M4.5 1.5H9.5L12.5 4.5V13.5H4.5Z" fill="#fff" stroke="#000"/><rect x="9" y="2" width="1" height="3" fill="#000"/><rect x="10" y="4" width="2" height="1" fill="#000"/><rect x="10" y="2" width="1" height="2" fill="#fff"/><rect x="6" y="5" width="3" height="1" fill="#f00"/><rect x="6" y="7" width="5" height="1" fill="#f00"/><rect x="6" y="9" width="5" height="1" fill="#f00"/><rect x="6" y="11" width="5" height="1" fill="#f00"/><rect x="2" y="0" width="3" height="1" fill="#000"/><rect x="1" y="1" width="1" height="3" fill="#000"/><rect x="5" y="1" width="1" height="3" fill="#000"/><rect x="2" y="1" width="3" height="3" fill="#fff"/><rect x="0.5" y="3.5" width="6" height="5" fill="#fff" stroke="#000"/><rect x="3" y="5" width="1" height="2" fill="#000"/></svg>
<svg style="left:10px;top:9px" width="16" height="16" viewBox="0 0 16 16"><rect width="16" height="16" fill="url(#apg)"/><path d="M0 9L2 4.5L7 3L8.5 8.5L12 12L7 14.5L4 14L2.5 16H0Z" fill="#0c64b2"/><path d="M8 1.8L15.8 0.3V11.5L11.5 12L13 7.5L11.5 4.5L8.8 5.5Z" fill="#0a5aa8"/><path d="M6.5 6.5C6 4 8.2 3.2 9.3 5.2C10.3 3.8 12.8 4.2 12.5 6.8C12.2 9 10.5 10.3 9.5 11C8 10 7 8.5 6.5 6.5Z" fill="#b8e0fa"/><path d="M3.5 13.5L11.5 12.2L16 10.5V16H3.5Z" fill="#6ea0d4"/><path d="M12 16L16 12V16Z" fill="#2a4a90" opacity="0.6"/><path d="M10.5 0.5L12 2.5L11 5Z" fill="#e8f6ff" opacity="0.8"/></svg>
<!--/ICONS-->
</body></html>
